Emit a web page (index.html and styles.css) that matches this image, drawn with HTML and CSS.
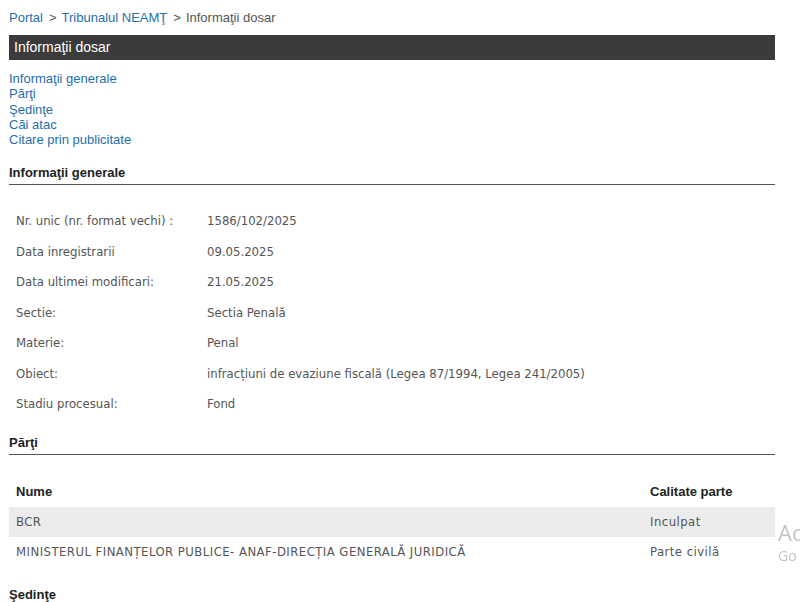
FILE: index.html
```html
<!DOCTYPE html>
<html lang="ro">
<head>
<meta charset="utf-8">
<title>Informaţii dosar</title>
<link rel="stylesheet" href="styles.css">
</head>
<body>
<div class="page">
  <div class="crumbs"><a href="#">Portal</a><span class="sep">&gt;</span><a href="#">Tribunalul NEAMŢ</a><span class="sep">&gt;</span><span class="cur">Informaţii dosar</span></div>
  <div class="bar">Informaţii dosar</div>
  <ul class="toc">
    <li><a href="#">Informaţii generale</a></li>
    <li><a href="#">Părţi</a></li>
    <li><a href="#">Şedinţe</a></li>
    <li><a href="#">Căi atac</a></li>
    <li><a href="#">Citare prin publicitate</a></li>
  </ul>
  <h2 class="sect">Informaţii generale</h2>
  <table class="info">
    <tr><td class="lbl">Nr. unic (nr. format vechi) :</td><td>1586/102/2025</td></tr>
    <tr><td class="lbl">Data inregistrarii</td><td>09.05.2025</td></tr>
    <tr><td class="lbl">Data ultimei modificari:</td><td>21.05.2025</td></tr>
    <tr><td class="lbl">Sectie:</td><td>Sectia Penală</td></tr>
    <tr><td class="lbl">Materie:</td><td>Penal</td></tr>
    <tr><td class="lbl">Obiect:</td><td>infracțiuni de evaziune fiscală (Legea 87/1994, Legea 241/2005)</td></tr>
    <tr><td class="lbl">Stadiu procesual:</td><td>Fond</td></tr>
  </table>
  <h2 class="sect sect2">Părţi</h2>
  <table class="parti">
    <tr class="head"><th>Nume</th><th class="cal">Calitate parte</th></tr>
    <tr class="alt"><td>BCR</td><td class="cal">Inculpat</td></tr>
    <tr><td>MINISTERUL FINANȚELOR PUBLICE- ANAF-DIRECȚIA GENERALĂ JURIDICĂ</td><td class="cal">Parte civilă</td></tr>
  </table>
  <h2 class="sect3">Şedinţe</h2>
</div>
<div class="wm"><div class="wm1">Activate Windows</div><div class="wm2">Go to Settings to activate Windows.</div></div>
</body>
</html>
```
FILE: styles.css
```css
html, body { margin: 0; padding: 0; overflow: hidden; background: #fff; }
body { font-family: "Liberation Sans", Arial, sans-serif; color: #555; }
.page { width: 766px; padding: 10px 0 0 9px; }
a { color: #1f6fae; text-decoration: none; }
.crumbs { font-size: 13px; line-height: 16px; color: #555; }
.crumbs .sep { margin: 0 5px 0 6px; }
.bar { margin-top: 9px; height: 25px; line-height: 25px; background: #3b3b3b; color: #fff; font-size: 14px; padding-left: 5px; }
.toc { list-style: none; margin: 11px 0 0; padding: 0; font-size: 13px; line-height: 15.25px; }
.sect { margin: 18px 0 0; padding: 0 0 4px; font-size: 13px; line-height: 15px; font-weight: bold; color: #222; border-bottom: 1px solid #555; }
.sect2 { margin-top: 16px; }
.info { border-collapse: collapse; margin-top: 20px; font-family: "DejaVu Sans Condensed", Tahoma, sans-serif; font-size: 13px; color: #555; }
.info td { height: 30.5px; padding: 0 7px; vertical-align: middle; }
.info td.lbl { width: 177px; }
.parti { border-collapse: collapse; margin-top: 21px; width: 766px; font-size: 13px; }
.parti th { text-align: left; font-weight: bold; color: #222; height: 31px; padding: 0 7px; font-family: "Liberation Sans", Arial, sans-serif; }
.parti td { height: 30px; padding: 0 7px; font-family: "DejaVu Sans Condensed", Tahoma, sans-serif; font-size: 13px; letter-spacing: 0.45px; color: #555; }
.parti .cal { width: 118px; }
.parti tr.alt td { background: #ececec; }
.sect3 { margin: 20px 0 0; font-size: 13px; line-height: 15px; font-weight: bold; color: #222; }
.wm { position: fixed; left: 778px; top: 518px; width: 22px; overflow: hidden; white-space: nowrap; font-family: "Open Sans", sans-serif; color: #c4c4c4; }
.wm1 { font-size: 22px; line-height: 28px; }
.wm2 { font-size: 14px; line-height: 20px; }
```
